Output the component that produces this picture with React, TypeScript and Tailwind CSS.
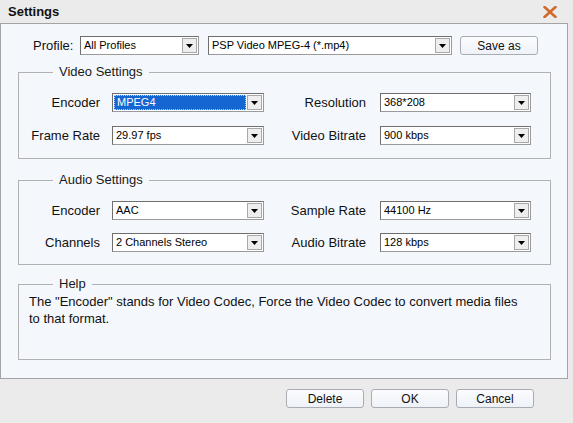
import React from "react";

const FONT = "font-['Liberation_Sans',Arial,sans-serif]";

const Combo: React.FC<{ value: string; className: string; active?: boolean }> = ({
  value,
  className,
  active,
}) => {
  return (
    <div
      className={`flex h-[19px] items-stretch border border-t-[#6f6f6f] border-l-[#6f6f6f] border-r-[#9a9a9a] border-b-[#9a9a9a] bg-white p-[1px] ${className}`}
    >
      <div className="flex min-w-0 flex-1 items-center">
        {active ? (
          <div className="flex h-full flex-1 items-center border border-dotted border-[#b9d3f3] bg-[#1466d2] pl-[2px] text-[11px] text-white">
            {value}
          </div>
        ) : (
          <span className="pl-[2px] text-[11px] leading-none text-black">{value}</span>
        )}
      </div>
      <div className="ml-[1px] flex w-[15px] items-center justify-center border border-[#a8a8a8] bg-[#eeeeee]">
        <svg width="7" height="4" viewBox="0 0 7 4">
          <path d="M0 0H7L3.5 4Z" fill="#000" />
        </svg>
      </div>
    </div>
  );
};

const Button: React.FC<{ label: string; className?: string }> = ({ label, className = "" }) => (
  <button
    type="button"
    className={`flex h-[19px] w-[78px] items-center justify-center rounded-[3px] border border-[#a9adb3] bg-gradient-to-b from-[#fbfcfe] to-[#eef2f7] text-[12px] text-[#111] ${className}`}
  >
    {label}
  </button>
);

const Group: React.FC<{ title: string; className?: string; children: React.ReactNode }> = ({
  title,
  className = "",
  children,
}) => (
  <div className={`relative mx-[17px] w-[533px] border border-[#b1b1b1] ${className}`}>
    <span className="absolute -top-[9px] left-[34px] bg-[#f4f8fc] px-[6px] text-[13px] leading-[16px] text-[#1a1a1a]">
      {title}
    </span>
    {children}
  </div>
);

type Field = { label: string; value: string; active?: boolean };

const Row: React.FC<{ left: Field; right: Field }> = ({ left, right }) => (
  <div className="flex h-[19px] items-center text-[13px] text-[#111]">
    <span className="w-[81px] text-right">{left.label}</span>
    <Combo value={left.value} active={left.active} className="ml-[12px] w-[152px]" />
    <span className="ml-[12px] w-[90px] text-right">{right.label}</span>
    <Combo value={right.value} className="ml-[14px] w-[151px]" />
  </div>
);

export default function App() {
  return (
    <div className={`flex h-[423px] w-[573px] flex-col bg-[#ebebeb] ${FONT}`}>
      {/* title bar */}
      <div className="flex h-[23px] items-center justify-between pl-[8px] pr-[16px]">
        <span className="text-[13px] font-bold text-[#111]">Settings</span>
        <svg width="14" height="12" viewBox="0 0 14 12">
          <path d="M1.5 1L12.5 11M12.5 1L1.5 11" stroke="#cf6a2c" strokeWidth="2.6" strokeLinecap="round" />
        </svg>
      </div>

      {/* main panel */}
      <div className="flex h-[356px] w-[568px] flex-col border border-[#a3a3a3] bg-[#f4f8fc]">
        <div className="mt-[12px] flex h-[19px] items-center text-[13px] text-[#111]">
          <span className="ml-[32px] w-[40px]">Profile:</span>
          <Combo value="All Profiles" className="ml-[7px] w-[119px]" />
          <Combo value="PSP Video MPEG-4 (*.mp4)" className="ml-[9px] w-[244px]" />
          <Button label="Save as" className="ml-[8px] w-[78px]" />
        </div>

        <Group title="Video Settings" className="mt-[17px] pt-[20px] pb-[13px]">
          <div className="flex flex-col gap-[14px]">
            <Row
              left={{ label: "Encoder", value: "MPEG4", active: true }}
              right={{ label: "Resolution", value: "368*208" }}
            />
            <Row
              left={{ label: "Frame Rate", value: "29.97 fps" }}
              right={{ label: "Video Bitrate", value: "900 kbps" }}
            />
          </div>
        </Group>

        <Group title="Audio Settings" className="mt-[21px] pt-[20px] pb-[12px]">
          <div className="flex flex-col gap-[13px]">
            <Row
              left={{ label: "Encoder", value: "AAC" }}
              right={{ label: "Sample Rate", value: "44100 Hz" }}
            />
            <Row
              left={{ label: "Channels", value: "2 Channels Stereo" }}
              right={{ label: "Audio Bitrate", value: "128 kbps" }}
            />
          </div>
        </Group>

        <Group title="Help" className="mt-[19px] h-[76px] pl-[10px] pr-[20px] pt-[8px]">
          <p className="text-[13px] leading-[17px] text-[#111]">
            The "Encoder" stands for Video Codec, Force the Video Codec to convert media files to that format.
          </p>
        </Group>
      </div>

      {/* footer buttons */}
      <div className="flex flex-1 items-start justify-end gap-[7px] pr-[39px] pt-[10px]">
        <Button label="Delete" />
        <Button label="OK" />
        <Button label="Cancel" />
      </div>
    </div>
  );
}
